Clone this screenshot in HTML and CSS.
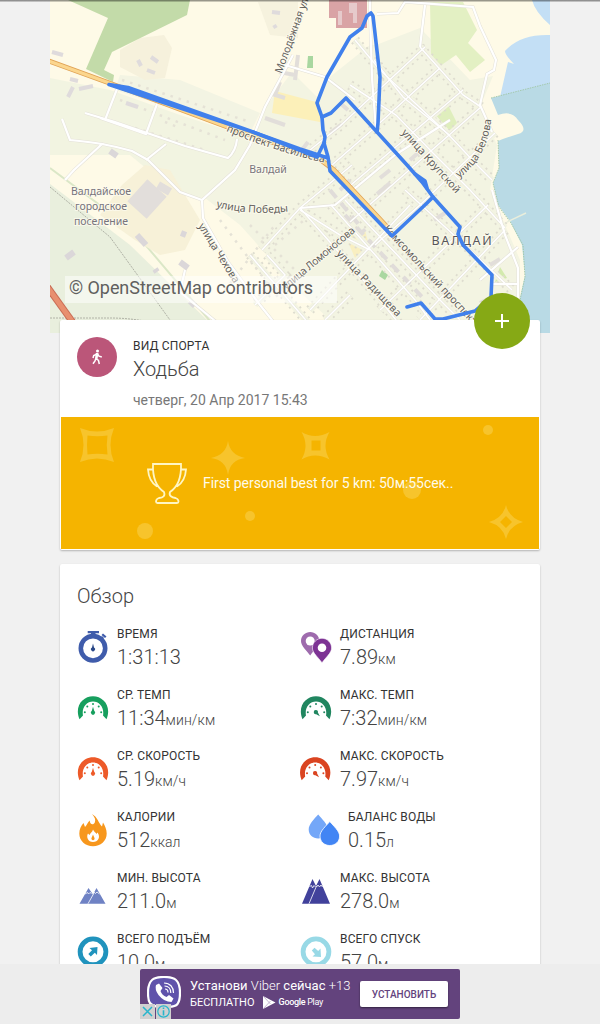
FILE: index.html
```html
<!DOCTYPE html>
<html lang="ru">
<head>
    <meta charset="UTF-8">
    <meta name="viewport" content="width=device-width, initial-scale=1.0">
    <title>Ходьба</title>
    <link rel="stylesheet" href="styles.css">
</head>
<body>
    <div class="screen">
        <div class="content">
            <svg class="map" viewBox="50 0 500 333" width="500" height="333">
                <defs>
                    <g id="streets">
                        <path d="M374 60L403 97L448 134L478 166L492 180"/>
                        <path d="M355 40L380 70L450 136"/>
                        <path d="M350 85L396 115L432 152L470 190L505 228"/>
                        <path d="M420 47L463 95L481 107"/>
                        <path d="M425 47L340 126L310 150"/>
                        <path d="M440 68L372 130L332 165"/>
                        <path d="M463 90L345 190"/>
                        <path d="M481 107L350 222"/>
                        <path d="M495 133L420 205L375 245"/>
                        <path d="M488 205L430 262L380 310"/>
                        <path d="M505 230L420 320"/>
                        <path d="M345 200L440 300L460 320"/>
                        <path d="M331 205L415 300L430 320"/>
                        <path d="M405 190L470 250L512 290"/>
                        <path d="M300 208L372 290L400 325"/>
                        <path d="M352 165L300 208L262 250"/>
                        <path d="M410 205L310 310"/>
                        <path d="M250 255L310 325"/>
                        <path d="M267 255L285 275L255 305"/>
                        <path d="M350 295L325 320"/>
                        <path d="M370 250L340 235L300 210"/>
                    </g>
                    <g id="roads">
                        <path d="M293 55L265 107L250 145L235 170L202 200L203 218L228 262L260 305L280 330"/>
                        <path d="M85 113L115 122L185 146L228 158Q236 151 237 139"/>
                        <path d="M117 89L105 120M157 104L146 134L100 118"/>
                        <path d="M62 119L70 140Q90 142 102 144L74 170L65 180M102 144Q118 147 132 151L148 160L180 192L202 200"/>
                        <path d="M166 144L146 160"/>
                        <path d="M370 0V14L372 78L376 130M377 14L398 13L405 2L473 7L480 26L496 60L494 70L487 74L480 105L492 132"/>
                        <path d="M425 5L420 47"/>
                        <path d="M285 65L325 77L355 100"/>
                        <path d="M300 208L335 205L395 155L450 120"/>
                        <path d="M492 190L505 235L518 268V315"/>
                        <path d="M185 270L180 292L220 325"/>
                        <path d="M492 284H518M518 247L480 280"/>
                    </g>
                    <path id="vasileva" d="M226 131Q280 154 340 166"/>
                    <path id="pobedy" d="M216 207Q255 217 300 210"/>
                    <path id="belova" d="M459 178Q492 155 492 105"/>
                </defs>

                <rect x="50" width="500" height="333" fill="#fefae7"/>
                <!-- land use -->
                <path d="M50 78L110 90L180 115L255 139L235 170L200 199L170 188L130 155H50Z" fill="#f2f4e1"/>
                <path d="M120 75L180 80L260 113L250 133L115 90Z" fill="#f3f4e3"/>
                <path d="M120 50L140 38L164 35L172 48L165 78L145 80L120 67Z" fill="#f6f1dc"/>
                <path d="M258 2H298V38L270 35Z" fill="#f6f2de"/>
                <path d="M320 100L326 80L370 45H376L420 28L470 80L493 76L480 107L497 145L490 190L520 260V320H330L300 292L240 225L205 198L252 145L265 108L292 72Z" fill="#f3f4e2"/>
                <path d="M50 184L130 245L212 325V333H50Z" fill="#e9efdd"/>
                <path d="M50 168L132 229L220 333" fill="none" stroke="#dbe7c7" stroke-width="2"/>
                <path d="M145 165L170 170L200 220L185 250L160 255L135 240L100 215L122 185Z" fill="#f7f1d8"/>
                <path d="M68 0H190L187 15L112 52L104 70L114 75L113 82L86 69L108 18Z" fill="#c3dba9"/>
                <path d="M430 2H463L477 30L468 43L485 60L470 72L456 55L440 66L431 55Z" fill="#e3f0c3"/>
                <path d="M434 113L447 103L457 123L450 131Z" fill="#dfeebd"/>
                <path d="M329 0H367V28H336V18H329Z" fill="#d9a3a5"/>
                <path d="M275 91L320 103V122L272 113Z" fill="#fcf0b9"/>
                <path d="M345 235L365 230L370 250L355 258Z" fill="#f9efc1"/>
                <path d="M308 56H313V68H307Z" fill="#a9d7a0"/>
                <path d="M382 270L388 275L385 280L379 276Z" fill="#a9d7a0"/>
                <path d="M495 282L507 278L500 267Z" fill="#d3eaad"/>
                <!-- water -->
                <path d="M532 0H550V25Q535 12 532 0ZM550 84L500 97L508 62L514 64Q505 55 505 51Q520 34 550 35Z" fill="#c3dff5"/>
                <path d="M550 83L491 98L498 115Q512 110 518 120Q529 131 518 134Q505 138 498 141L499 168L493 183L498 205L510 221L522 245L525 275L520 298L522 333H550Z" fill="#b9dae5"/>
                <path d="M491 98L550 83M498 140L499 168L493 183L499 207L511 223L523 245L525 277L520 300" fill="none" stroke="#9cc39a" stroke-width=".8" stroke-dasharray="1.5 1"/>
                <path d="M507 222L526 213" stroke="#e9eedc" stroke-width="1.500"/>
                <!-- houses -->
                <use href="#streets" class="plots"/>
                <use href="#streets" class="clear"/>
                <path d="M122 80L250 122M120 100L225 140M165 122L180 128M135 128L205 150" class="village"/>
                <path d="M220 220L280 300M250 225L300 275M225 290L275 225M275 245L310 215" class="village"/>
                <path d="M137 210L157 188" stroke="#e2dedb" stroke-width="26"/>
                <path d="M158 185L170 192" stroke="#e2dedb" stroke-width="8"/>
                <path d="M110 151L117 156M137 235L146 245M180 262L188 268M181 233L186 235M155 269L157 272M66 258L74 252M190 301L195 306" stroke="#dbd7d9" stroke-width="6"/>
                <path d="M151 57L158 62M147 70L155 73M138 60L141 66M52 52L63 55M70 79L78 81M68 97L73 87M79 89L93 86M126 103L138 107M272 12L280 13M274 25L276 28" stroke="#dfdbdc" stroke-width="4"/>
                <path d="M279 72L295 75M280 82L275 95L285 98M298 55L295 80M265 118L285 125M330 133L342 124M308 142L298 155M340 103L348 110M410 160L418 153M380 178L390 170M434 220L445 213M377 194L390 183M350 180L340 190M490 265L500 259M480 303L492 297" fill="none" stroke="#e2deda" stroke-width="4"/>
                <path d="M345 215L425 300M330 190L365 232M395 240L450 300" stroke="#e0dcd9" stroke-width="4" stroke-dasharray="10 7"/>
                <path d="M340 11V25M351 3V13M355 3V23" fill="none" stroke="#e6cacb" stroke-width="4"/>
                <!-- roads -->
                <use href="#streets" class="casing"/>
                <use href="#roads" class="casing road"/>
                <use href="#streets" class="asphalt"/>
                <use href="#roads" class="asphalt road"/>
                <path d="M50 187L110 237L170 320" class="rail"/>
                <path d="M50 318H110Q130 318 150 322" class="rail"/>
                <path d="M46 60L112 84L230 128L317 157L334 170L388 228" class="highway-edge"/>
                <path d="M46 60L112 84L230 128L317 157L334 170L388 228" class="highway"/>
                <path d="M46 285L74 324" stroke="#c96d55" stroke-width="7"/>
                <path d="M46 285L74 324" stroke="#e8906f" stroke-width="5"/>

                <g class="map-label">
                    <text transform="translate(281.500 74) rotate(-70)" textLength="79">Молодёжная ул</text>
                    <text><textPath href="#vasileva">проспект Васильева</textPath></text>
                    <text><textPath href="#pobedy">улица Победы</textPath></text>
                    <text transform="translate(198 226) rotate(58)" textLength="68">улица Чехова</text>
                    <text transform="translate(286 290) rotate(-40)" textLength="91">улица Ломоносова</text>
                    <text transform="translate(336 254) rotate(46)" textLength="88">улица Радищева</text>
                    <text transform="translate(383 229) rotate(47)" textLength="131">Комсомольский проспект</text>
                    <text transform="translate(401 133) rotate(48)" textLength="82">улица Крупской</text>
                    <text><textPath href="#belova">улица Белова</textPath></text>
                </g>
                <g class="map-place">
                    <text x="268" y="173">Валдай</text>
                    <text x="101" y="195">Валдайское</text>
                    <text x="101" y="210">городское</text>
                    <text x="101" y="225">поселение</text>
                    <text class="town" x="462.500" y="245">ВАЛДАЙ</text>
                </g>

                <path class="track" d="M109 84.500L253 132M109 84.500L128 87.500L253 132L317 157L324 143L325 137L323 130L322 117L317 103L327 77L350 37L362 28L367 16L371 13L373 16L380 77L378 123L377 132"/>
                <path class="track" d="M322 117L331 113L346 98L377 132L407 165L422 182L433 197L460 227L458 234L463 245L492 275L491 297L475 311L443 319H435L421 303L407 307"/>
                <path class="track" d="M253 132L300 149L328 158M324 143L328 157L330 171L392 236L427 203L433 197"/>
                <path class="track" d="M415 174L425 181L427 188"/>

                <rect x="65" y="276" width="272" height="27" fill="#fff" fill-opacity=".5"/>
                <text class="credit" x="69" y="294" textLength="244">© OpenStreetMap contributors</text>
            </svg>

            <section class="card activity">
                <button class="fab" aria-label="Добавить">
                    <svg width="14" height="14" viewBox="0 0 14 14"><path d="M7 0V14M0 7H14" stroke="#fff" stroke-width="2"/></svg>
                </button>
                <div class="sport">
                    <div class="sport-icon">
                        <svg width="12" height="16" viewBox="0 0 12 16">
                            <circle cx="6.500" cy="2" r="1.500" fill="#fff"/>
                            <path d="M6 4.500L5 9.500L7.500 11.500L8.300 15M5 9L4 12L2 14.800M6 5L2.700 6.500L2 9M6.500 5L8 7.200L10.800 8" fill="none" stroke="#fff" stroke-width="1.500"/>
                            <path d="M4.800 4H7.500L6.500 10L4.300 9.500Z" fill="#fff"/>
                        </svg>
                    </div>
                    <div>
                        <div class="label">ВИД СПОРТА</div>
                        <div class="sport-name">Ходьба</div>
                        <div class="date">четверг, 20 Апр 2017 15:43</div>
                    </div>
                </div>
                <div class="best">
                    <svg class="confetti" viewBox="61 418 478 131" width="478" height="131">
                        <path fill-rule="evenodd" d="M80 428Q97 435 114 428Q107 445 114 462Q97 455 80 462Q87 445 80 428ZM87.500 435.500Q86.500 445 87.500 454.500Q97 453 107.500 454.500Q106 445 107.500 435.500Q97 437 87.500 435.500Z"/>
                        <path fill-rule="evenodd" d="M301.500 432Q315 440 329.500 432Q321.500 445.500 329.500 459.500Q315 451.500 301.500 459.500Q309.500 445.500 301.500 432ZM311.500 440.500V450.500H320.500V440.500Z"/>
                        <path d="M228 441Q230 455 245 458Q230 460 228 475Q226 460 211 458Q226 455 228 441Z"/>
                        <path fill-rule="evenodd" d="M506 505Q509 518 523 522Q509 526 506 539Q503 526 489 522Q503 518 506 505ZM506 516L500 522L506 528L512 522Z"/>
                        <circle cx="145" cy="531" r="8"/>
                        <circle cx="250" cy="516" r="5"/>
                        <circle cx="488" cy="430" r="5"/>
                        <circle cx="412" cy="490" r="9"/>
                    </svg>
                    <svg class="trophy" width="40" height="41" viewBox="0 0 40 41">
                        <path d="M6 1H34C34.500 14 32 23 23 29C21.500 33 25 34.500 28.500 35Q31.500 36 31.500 38.500Q31.500 40 30 40H10.500Q9 40 9 38.500Q9 36 12 35C16 34.500 18.500 33 17 29C8 23 5.500 14 6 1ZM6 6.500H1C1.500 14 4.500 20 10 23.500M34 6.500H39C38.500 14 35.500 20 30 23.500"/>
                    </svg>
                    <span class="best-text">First personal best for 5 km: 50м:55сек..</span>
                </div>
            </section>

            <section class="card overview">
                <h2>Обзор</h2>
                <div class="stats">
                    <div class="stat">
                        <svg width="32" height="44" viewBox="0 0 32 44">
                            <circle cx="16" cy="24.300" r="12.200" fill="none" stroke="#3f5cab" stroke-width="4.600"/>
                            <path d="M10.700 7H22V9.200H18.500V12H14V9.200H10.700ZM24.500 11L26 9.400L29.500 12.600L28 14.100ZM23.500 13.500L25 12L27 14L25.500 15.500Z" fill="#3f5cab"/>
                            <path d="M16 19.500L17 23.500A2 2 0 1 1 15 23.500Z" fill="#294787"/>
                        </svg>
                        <div>
                            <div class="label">ВРЕМЯ</div>
                            <div class="value">1:31:13</div>
                        </div>
                    </div>
                    <div class="stat">
                        <svg width="32" height="44" viewBox="0 0 32 44">
                            <path d="M10.200 8C15 8 19.300 11.500 19.300 17C19.300 22 14 26 10.200 31.500C6 26 1 22 1 17C1 11.500 5.500 8 10.200 8Z" fill="#9e6bad"/>
                            <circle cx="10.200" cy="17" r="4.500" fill="#fff"/>
                            <path d="M22 14.300C27 14.300 31.600 18.500 31.600 24C31.600 29 26 33 22 38.800C18 33 12.400 29 12.400 24C12.400 18.500 17 14.300 22 14.300Z" fill="#7d3394" stroke="#fff" stroke-width=".6"/>
                            <circle cx="22" cy="23.800" r="4.300" fill="#fff"/>
                        </svg>
                        <div>
                            <div class="label">ДИСТАНЦИЯ</div>
                            <div class="value">7.89<span>км</span></div>
                        </div>
                    </div>

                    <div class="stat">
                        <svg width="32" height="44" viewBox="0 0 32 44" fill="#179f5e">
                            <path id="dial" d="M2.500 34.300C-3 21 6 11.300 16 11.300S35 21 29.500 34.300L26 30.500C27.500 22.500 22.500 16.500 16 16.500S4.500 22.500 6 30.500Z"/>
                            <g id="ticks"><circle cx="7.800" cy="27.300" r="1"/><circle cx="10.300" cy="21.500" r="1"/><circle cx="16" cy="19" r="1"/><circle cx="21.700" cy="21.500" r="1"/><circle cx="24.200" cy="27.300" r="1"/></g>
                            <path id="needle" d="M16 21.800L17.200 25.800A2.100 2.100 0 1 1 14.800 25.800Z"/>
                        </svg>
                        <div>
                            <div class="label">СР. ТЕМП</div>
                            <div class="value">11:34<span>мин/км</span></div>
                        </div>
                    </div>
                    <div class="stat">
                        <svg width="32" height="44" viewBox="0 0 32 44" fill="#218660">
                            <use href="#dial"/><use href="#ticks"/><use href="#needle" transform="rotate(135 16 27.300)"/>
                        </svg>
                        <div>
                            <div class="label">МАКС. ТЕМП</div>
                            <div class="value">7:32<span>мин/км</span></div>
                        </div>
                    </div>

                    <div class="stat">
                        <svg width="32" height="44" viewBox="0 0 32 44" fill="#ed5a29">
                            <use href="#dial"/><use href="#ticks"/><use href="#needle"/>
                        </svg>
                        <div>
                            <div class="label">СР. СКОРОСТЬ</div>
                            <div class="value">5.19<span>км/ч</span></div>
                        </div>
                    </div>
                    <div class="stat">
                        <svg width="32" height="44" viewBox="0.800 0 32 44" fill="#da4421">
                            <use href="#dial"/><use href="#ticks"/><use href="#needle" transform="rotate(135 16 27.300)"/>
                        </svg>
                        <div>
                            <div class="label">МАКС. СКОРОСТЬ</div>
                            <div class="value">7.97<span>км/ч</span></div>
                        </div>
                    </div>

                    <div class="stat">
                        <svg width="32" height="44" viewBox="0 0 32 44">
                            <path d="M15 7C17.500 10 19 12.500 17.800 15.500C16.500 18.500 12.500 17.500 12.800 13.500C10.500 15.500 10 18 8 20L6.500 16C4 19 2.300 22 2.300 26.500C2.300 34 8.500 39.200 16 39.200S29.700 34 29.700 26.500C29.700 22 28 19 26 15.500L25 19.500C21 15.500 21 10.500 15 7Z" fill="#f7971d"/>
                            <path d="M16 22.500C17 25 19 25.500 19.500 27L20.500 25.500C24 30 21 35 16 35S9 30 11 26.500L12.500 28C13 26 15.500 25 16 22.500Z" fill="#fff"/>
                            <path d="M16 27.500L17.500 31A1.600 1.600 0 1 1 14.500 31Z" fill="#f7971d"/>
                        </svg>
                        <div>
                            <div class="label">КАЛОРИИ</div>
                            <div class="value">512<span>ккал</span></div>
                        </div>
                    </div>
                    <div class="stat water">
                        <svg width="32" height="44" viewBox="0 0 32 44">
                            <path d="M10.200 7.500C14 12 20 17.500 20 22.500C20 28 15.500 31.500 10.200 31.500S.700 28 .700 22.500C.700 17.500 6 12 10.200 7.500Z" fill="#74a7f8"/>
                            <path d="M21.800 14.500C25.500 19 31.600 24 31.600 29C31.600 35 27 38.500 21.800 38.500S12 35 12 29C12 24 18 19 21.800 14.500Z" fill="#4285f4" stroke="#fff" stroke-width=".8"/>
                        </svg>
                        <div>
                            <div class="label">БАЛАНС ВОДЫ</div>
                            <div class="value">0.15<span>л</span></div>
                        </div>
                    </div>

                    <div class="stat">
                        <svg width="32" height="44" viewBox="0 0 32 44">
                            <path d="M2.500 35.700L11.500 20L16 26.500L19.500 20L28.500 35.700Z" fill="#6f82c4"/>
                            <path d="M11 35.700L17 25M8 26L10.500 24.500L11.500 26L13 24.500L14.500 25.500M17 24L18.500 25.500L20 24L22.500 26" fill="none" stroke="#fff" stroke-width=".8"/>
                        </svg>
                        <div>
                            <div class="label">МИН. ВЫСОТА</div>
                            <div class="value">211.0<span>м</span></div>
                        </div>
                    </div>
                    <div class="stat">
                        <svg width="32" height="44" viewBox="0 0 32 44">
                            <path d="M2 35.700L12.500 11L16 18L19.500 11L30 35.700Z" fill="#41419b"/>
                            <path d="M9 35.700L16.500 18M9.500 18.500L11.500 17.500L12.500 20L14 17.500L15.500 19M16.500 19L18 17L19.500 19L21 17L22.500 19" fill="none" stroke="#fff" stroke-width=".8"/>
                        </svg>
                        <div>
                            <div class="label">МАКС. ВЫСОТА</div>
                            <div class="value">278.0<span>м</span></div>
                        </div>
                    </div>

                    <div class="stat">
                        <svg width="32" height="44" viewBox="0 0 32 44">
                            <circle cx="16" cy="22.800" r="12.900" fill="none" stroke="#2093bd" stroke-width="4.800"/>
                            <path d="M12.500 19L20.500 18L20 26L17.800 23.800L13.800 27.500L11.300 25L15 21.300Z" fill="#2093bd"/>
                        </svg>
                        <div>
                            <div class="label">ВСЕГО ПОДЪЁМ</div>
                            <div class="value">10.0<span>м</span></div>
                        </div>
                    </div>
                    <div class="stat">
                        <svg width="32" height="44" viewBox="0 0 32 44">
                            <circle cx="16" cy="22.800" r="12.900" fill="none" stroke="#98d9e6" stroke-width="4.800"/>
                            <path d="M20.500 19.500L21 28L12.500 27.500L15 25.200L11.800 21.500L14.500 18.800L18.200 22Z" fill="#98d9e6"/>
                        </svg>
                        <div>
                            <div class="label">ВСЕГО СПУСК</div>
                            <div class="value">57.0<span>м</span></div>
                        </div>
                    </div>
                </div>
            </section>
        </div>

        <div class="ad-bar">
            <div class="ad">
                <svg class="viber" width="34" height="38" viewBox="0 0 34 38">
                    <path d="M17 1C27 1 33 3 33 17S28 31 17 31L11 36V31C3 29 1 27 1 17C1 3 7 1 17 1Z" fill="#6053ab" stroke="#fff" stroke-width="2.200"/>
                    <path d="M9 9L12 7.500L15.500 12L13.500 15Q15 19.500 19.500 21L22 19L26.500 22.500L24.500 26Q17 26 11.500 19Q7.500 13.500 9 9Z" fill="#fff"/>
                    <path d="M17 7C23 7 26.500 11 26.500 17M17.500 10C21.500 10 23.800 13 23.800 17M18 13C20 13 21 14.500 21 16.500" fill="none" stroke="#fff" stroke-width="1.200"/>
                </svg>
                <div class="ad-text">
                    <div class="ad-title">Установи <span>Viber</span> сейчас <span>+13</span></div>
                    <div class="ad-sub">БЕСПЛАТНО
                        <svg width="14" height="13" viewBox="0 0 14 13"><path d="M1 0L13.500 6.500L1 13Z" fill="#fff"/><path d="M1 0L8.500 8M1 13L8.500 5" stroke="#b9a6c6" stroke-width=".8"/></svg>
                        <span class="play"><b>Google</b> Play</span>
                    </div>
                </div>
                <button class="install">УСТАНОВИТЬ</button>
                <div class="ad-choices">
                    <svg width="15" height="15" viewBox="0 0 15 15"><path d="M3 3L12 12M12 3L3 12" stroke="#27b5cc" stroke-width="1.500"/></svg>
                    <svg width="15" height="15" viewBox="0 0 15 15"><circle cx="7.500" cy="7.500" r="5.700" fill="none" stroke="#27b5cc" stroke-width="1.200"/><path d="M7.500 3.500V5M7.500 6.300V11.500" stroke="#27b5cc" stroke-width="1.600"/></svg>
                </div>
            </div>
        </div>
    </div>
</body>
</html>
```
FILE: styles.css
```css
* {
    box-sizing: border-box;
}
body {
    margin: 0;
    background: #f1f1f1;
    color: #444;
    font-family: Roboto, "Liberation Sans", sans-serif;
}
button {
    border: 0;
    padding: 0;
    font-family: inherit;
}
svg {
    flex: none;
}
.screen {
    position: relative;
    display: flex;
    flex-direction: column;
    height: 1024px;
    overflow: hidden;
}
/* shadow of the toolbar above */
.screen::before {
    content: "";
    position: absolute;
    top: 0;
    left: 0;
    right: 0;
    height: 2px;
    background: linear-gradient(rgba(0, 0, 0, .5), rgba(0, 0, 0, .1));
}
.content {
    flex: 1;
    min-height: 0;
    overflow: hidden;
    padding: 0 50px;
}

/* map */
.map {
    display: block;
}
.map .plots {
    fill: none;
    stroke: #dedccf;
    stroke-width: 10;
    stroke-dasharray: 2 4.5;
}
.map .clear {
    fill: none;
    stroke: #f3f4e2;
    stroke-width: 6.5;
}
.village {
    fill: none;
    stroke: #e5e2d6;
    stroke-width: 2.5;
    stroke-dasharray: 2.5 6;
}
.casing {
    fill: none;
    stroke: #e4e1d8;
    stroke-width: 2.4;
}
.asphalt {
    fill: none;
    stroke: #fff;
    stroke-width: 1.6;
}
.casing.road {
    stroke-width: 3.2;
}
.asphalt.road {
    stroke-width: 2.2;
}
.rail {
    fill: none;
    stroke: #b0b2a6;
    stroke-width: 1;
    stroke-dasharray: 2 1;
}
.highway-edge {
    fill: none;
    stroke: #e0a254;
    stroke-width: 5;
}
.highway {
    fill: none;
    stroke: #fbd68e;
    stroke-width: 3.4;
}
.track {
    fill: none;
    stroke: #4080ec;
    stroke-width: 3.6;
    stroke-linecap: round;
    stroke-linejoin: round;
}
.map-label,
.map-place {
    font-family: "Noto Sans", sans-serif;
    font-size: 10.5px;
    fill: #62605c;
    stroke: #fdfbee;
    stroke-width: 2px;
    stroke-opacity: .8;
    paint-order: stroke;
}
.map-place {
    fill: #77747c;
    text-anchor: middle;
}
.map-place .town {
    font-size: 12.5px;
    letter-spacing: 1.8px;
    fill: #57555a;
}
.credit {
    font-size: 18px;
    fill: #60605e;
}

/* cards */
.card {
    position: relative;
    margin: 0 10px;
    background: #fff;
    border-radius: 2px;
    box-shadow: 0 1px 2px rgba(0, 0, 0, .25);
}
.activity {
    margin-top: -13px;
    padding: 0 1px 1px;
}
.fab {
    position: absolute;
    top: -27px;
    right: 10px;
    width: 56px;
    height: 56px;
    border-radius: 50%;
    background: #86a915;
    display: flex;
    align-items: center;
    justify-content: center;
}
.sport {
    display: flex;
    gap: 16px;
    height: 97px;
    padding: 17px 16px 0;
}
.sport-icon {
    width: 40px;
    height: 40px;
    border-radius: 50%;
    background: #bb5679;
    display: flex;
    align-items: center;
    justify-content: center;
}
.label {
    font-size: 12px;
    line-height: 16px;
    letter-spacing: .15px;
    color: #333;
    white-space: nowrap;
}
.sport-name {
    font-size: 20px;
    font-weight: 300;
    line-height: 24px;
    margin-top: 3px;
}
.sport .label {
    margin-top: 1px;
}
.date {
    font-size: 14px;
    line-height: 18px;
    margin-top: 10px;
    color: #777;
}
.best {
    position: relative;
    display: flex;
    align-items: center;
    gap: 16px;
    height: 132px;
    padding-left: 86px;
    background: #f5b400;
}
.confetti {
    position: absolute;
    left: 0;
    top: 1px;
    fill: #f7c42c;
}
.trophy {
    position: relative;
    fill: none;
    stroke: #fff6c4;
    stroke-width: 1.8;
}
.best-text {
    position: relative;
    font-size: 14px;
    letter-spacing: -.06px;
    color: #fffbe8;
}
.overview {
    margin-top: 14px;
    padding: 20px 17px 0;
    height: 440px;
}
h2 {
    margin: 0;
    font-size: 20px;
    font-weight: 300;
    line-height: 24px;
}
.stats {
    display: grid;
    grid-template-columns: 223px 223px;
    grid-auto-rows: 61px;
    padding-top: 16px;
}
.stat {
    display: flex;
    gap: 8px;
}
.stat.water {
    padding-left: 8px;
}
.stat .label {
    margin-top: 2px;
}
.value {
    font-size: 20px;
    font-weight: 300;
    line-height: 24px;
    margin-top: 3px;
    white-space: nowrap;
}
.value span {
    font-size: 14px;
    letter-spacing: .1px;
}

/* bottom ad */
.ad-bar {
    height: 60px;
    display: flex;
    align-items: center;
    justify-content: center;
    background: #ededed;
}
.ad {
    position: relative;
    display: flex;
    width: 320px;
    height: 50px;
    padding-left: 7px;
    border-radius: 2px;
    background: #63437d;
    color: #fff;
}
.viber {
    margin-top: 7px;
}
.ad-text {
    width: 170px;
    margin: 8px 0 0 9px;
    white-space: nowrap;
}
.ad-title {
    font-size: 13px;
    line-height: 17px;
}
.ad-title span {
    font-weight: 300;
}
.ad-sub {
    display: flex;
    align-items: center;
    gap: 7px;
    font-size: 11px;
    line-height: 17px;
}
.play {
    margin-left: -4px;
    font-size: 9px;
    letter-spacing: -.3px;
}
.play b {
    font-weight: 500;
}
.install {
    width: 88px;
    height: 26px;
    margin-top: 12px;
    border-radius: 2px;
    background: #fff;
    color: #63437d;
    font-size: 10px;
    font-weight: 500;
    box-shadow: 0 1px 2px rgba(0, 0, 0, .5);
}
.ad-choices {
    position: absolute;
    left: 0;
    bottom: 0;
    display: flex;
    gap: 1px;
}
.ad-choices svg {
    background: #d0d0d0;
}
```
